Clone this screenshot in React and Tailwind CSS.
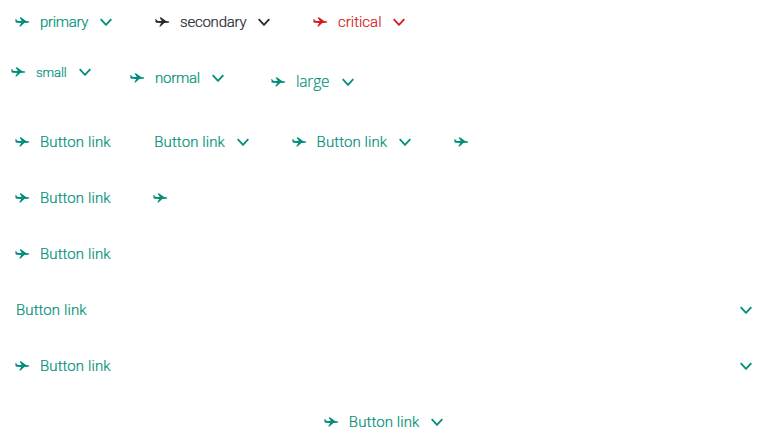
import React from "react";

function Plane() {
  return (
    <svg viewBox="0 0 20 20" className="h-5 w-5 shrink-0" fill="currentColor">
      <path d="M2.900 7.200h1.100l1.900 1.700 3.900.2-2.200-3.500 1.300-.3 5.200 3.800 1.800.1c.8.1 1.300.4 1.300.8s-.5.8-1.300.8l-3.600.2-3.800 3.600H7.200l2-3.600-4.600-.3c-.8-.1-1.300-.5-1.400-1.100l.6-.5z" />
    </svg>
  );
}

function Chevron() {
  return (
    <svg viewBox="0 0 20 20" className="h-5 w-5 shrink-0" fill="none" stroke="currentColor" strokeWidth="1.8" strokeLinejoin="round">
      <path d="M4.700 7.200 10 12.800l5.300-5.600" />
    </svg>
  );
}

const sizes = {
  small: "h-8 text-[13px] px-2",
  normal: "h-11 text-[15px] px-3",
  large: "h-[52px] text-[15.5px] px-4 font-['Open_Sans',sans-serif]",
};

function ButtonLink({ children, width = "w-[70.3px] tracking-[0.1px]", size = "normal", color = "text-[#008f7a]", left = true, right = false, className = "" }) {
  return (
    <button className={`flex shrink-0 items-center gap-2 ${sizes[size]} ${color} ${className}`}>
      {left && <Plane />}
      {children && (
        <span className={`shrink-0 whitespace-nowrap text-left [-webkit-text-stroke:0.2px_currentColor] ${width} ${left ? "" : "ml-1"} ${right ? "" : "mr-1"}`}>{children}</span>
      )}
      {right && <Chevron />}
    </button>
  );
}

export default function App() {
  return (
    <main className="flex h-[444px] w-[768px] flex-col gap-3 overflow-hidden bg-white font-['Roboto',sans-serif] font-[350]">
      <div className="flex gap-3">
        <ButtonLink right width="w-[48px] tracking-[-0.32px]">primary</ButtonLink>
        <ButtonLink right width="w-[66px] tracking-[-0.22px]" color="text-[#252a31]">secondary</ButtonLink>
        <ButtonLink right width="w-[43px]" color="text-[#d21c1c]">critical</ButtonLink>
      </div>
      <div className="flex h-[52px] items-start gap-3">
        <ButtonLink right size="small" width="w-[31px] pt-0.5 tracking-[-0.05px]">small</ButtonLink>
        <ButtonLink right width="w-[45px] tracking-[-0.25px]">normal</ButtonLink>
        <ButtonLink right size="large" width="w-[34px] tracking-[-0.2px]">large</ButtonLink>
      </div>
      <div className="flex gap-3">
        <ButtonLink>Button link</ButtonLink>
        <ButtonLink left={false} right>Button link</ButtonLink>
        <ButtonLink right>Button link</ButtonLink>
        <ButtonLink />
      </div>
      <div className="flex gap-3">
        <ButtonLink>Button link</ButtonLink>
        <ButtonLink />
      </div>
      <ButtonLink>Button link</ButtonLink>
      <ButtonLink left={false} right className="w-full justify-between">Button link</ButtonLink>
      <ButtonLink right className="w-full [&>svg:last-child]:ml-auto">Button link</ButtonLink>
      <ButtonLink right className="w-full justify-center">Button link</ButtonLink>
    </main>
  );
}
